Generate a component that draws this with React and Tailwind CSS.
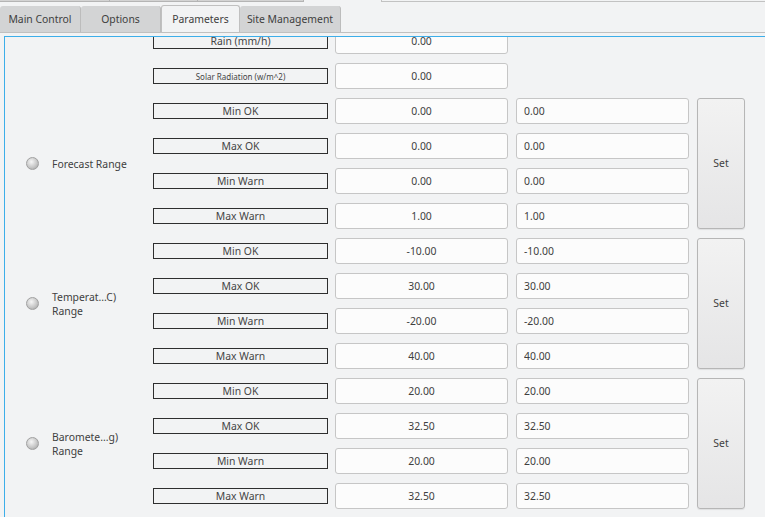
const groups = [
  {
    name: ["Forecast Range"],
    rows: [
      ["Min OK", "0.00", "0.00"],
      ["Max OK", "0.00", "0.00"],
      ["Min Warn", "0.00", "0.00"],
      ["Max Warn", "1.00", "1.00"],
    ],
  },
  {
    name: ["Temperat...C)", "Range"],
    rows: [
      ["Min OK", "-10.00", "-10.00"],
      ["Max OK", "30.00", "30.00"],
      ["Min Warn", "-20.00", "-20.00"],
      ["Max Warn", "40.00", "40.00"],
    ],
  },
  {
    name: ["Baromete...g)", "Range"],
    rows: [
      ["Min OK", "20.00", "20.00"],
      ["Max OK", "32.50", "32.50"],
      ["Min Warn", "20.00", "20.00"],
      ["Max Warn", "32.50", "32.50"],
    ],
  },
];

const tabs = [
  { label: "Main Control", w: "w-[81px]" },
  { label: "Options", w: "w-[80px]" },
  { label: "Parameters", w: "w-[79px]", active: true },
  { label: "Site Management", w: "w-[101px]" },
];

function FieldLabel({ children, small }) {
  return (
    <div
      className={`w-[175px] h-4 shrink-0 border border-[#2e2e2e] flex items-center justify-center pt-px text-[#454545] ${
        small ? "text-[8px]" : "text-[10.4px]"
      }`}
    >
      {children}
    </div>
  );
}

function Field({ value, left }) {
  return (
    <input
      readOnly
      value={value}
      className={`w-[173px] h-[26px] shrink-0 border border-[#c6c6c6] rounded-[3px] bg-[#fcfcfc] text-[10.4px] text-[#404040] outline-none ${
        left ? "text-left pl-[7px]" : "text-center"
      }`}
    />
  );
}

function Radio() {
  return (
    <div className="w-[13px] h-[13px] shrink-0 rounded-full border border-[#a0a0a0] bg-[radial-gradient(circle_at_40%_35%,#f6f6f6,#c4c4c4_60%,#9a9a9a)]" />
  );
}

function Group({ group }) {
  return (
    <div className="flex">
      <div className="w-[148px] shrink-0 flex items-center pl-[21px] gap-[13px]">
        <Radio />
        <div className="leading-[14px] text-[#404040]">
          {group.name.map((n) => (
            <div key={n}>{n}</div>
          ))}
        </div>
      </div>
      <div className="flex flex-col gap-[9px]">
        {group.rows.map((r) => (
          <div key={r[0]} className="flex items-center h-[26px]">
            <FieldLabel>{r[0]}</FieldLabel>
            <div className="ml-[7px]">
              <Field value={r[1]} />
            </div>
            <div className="ml-[8px]">
              <Field value={r[2]} left />
            </div>
          </div>
        ))}
      </div>
      <button className="ml-[8px] w-[48px] h-[131px] shrink-0 border border-[#b6b6b6] rounded-[3px] bg-gradient-to-b from-[#f2f2f2] to-[#e5e5e6] shadow-[0_1px_1px_rgba(0,0,0,0.08)] text-[10.4px] text-[#404040]">
        Set
      </button>
    </div>
  );
}

export default function App() {
  return (
    <div className="w-[765px] h-[517px] overflow-hidden bg-[#f2f3f4] text-[10.4px] text-[#404040] font-['Noto_Sans',sans-serif]">
      {/* widgets above, only their bottom edge shows */}
      <div className="flex h-[5px]">
        <div className="flex w-[304px] h-[2px] bg-[#d3d3d3] border-b border-r border-[#b4b4b4]">
          <div className="w-[110px] border-r border-[#b4b4b4]" />
          <div className="w-[88px] border-r border-[#b4b4b4]" />
        </div>
        <div className="ml-[77px] flex-1 h-[2px] border-l border-b border-[#c2c2c2]" />
      </div>

      {/* tab bar */}
      <div className="flex h-[27px]">
        {tabs.map((t) => (
          <div
            key={t.label}
            className={`${t.w} flex items-center justify-center pt-px rounded-t-[3px] ${
              t.active
                ? "bg-[#f2f3f4] border border-b-0 border-[#c0c0c0]"
                : "bg-[#d3d4d5] border-r border-[#bcbcbc] mt-[1px]"
            }`}
          >
            {t.label}
          </div>
        ))}
      </div>

      {/* panel */}
      <div className="border-t border-[#c0c0c0] pt-[3px] pl-[4px] h-[485px]">
        <div className="h-full border-l border-t border-[#3daee9] overflow-hidden">
          <div className="-mt-[9px] flex flex-col gap-[9px]">
            <div className="flex items-center h-[26px] pl-[148px]">
              <FieldLabel>Rain (mm/h)</FieldLabel>
              <div className="ml-[7px]">
                <Field value="0.00" />
              </div>
            </div>
            <div className="flex items-center h-[26px] pl-[148px]">
              <FieldLabel small>Solar Radiation (w/m^2)</FieldLabel>
              <div className="ml-[7px]">
                <Field value="0.00" />
              </div>
            </div>
            {groups.map((g) => (
              <Group key={g.name[0]} group={g} />
            ))}
          </div>
        </div>
      </div>
    </div>
  );
}
